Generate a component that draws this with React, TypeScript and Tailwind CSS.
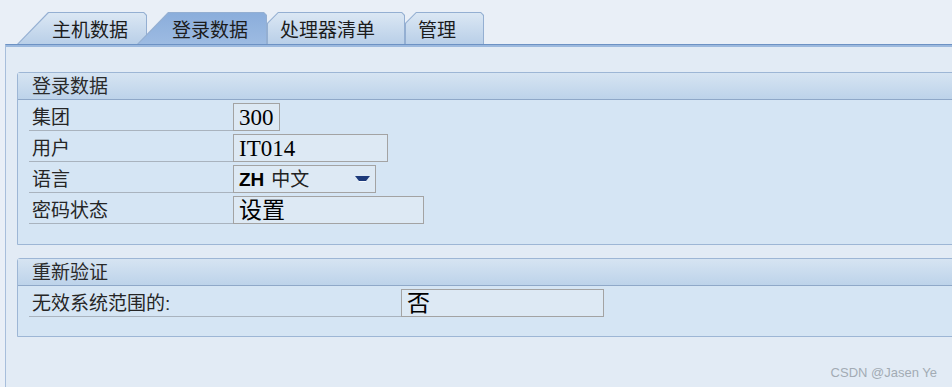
import React from 'react';

// SAP GUI style tab strip + grouped form (登录数据)

const cjk = "font-['Liberation_Sans','Noto_Sans_CJK_SC',sans-serif]";
const inputFont = "font-['Liberation_Serif','Noto_Sans_CJK_SC',serif]";

function SlantTab({ label, selected }: { label: string; selected?: boolean }) {
    return (
        <div className={`relative h-full w-[130px] ${selected ? 'z-20 -ml-[10px]' : 'z-10'}`}>
            <div className="absolute inset-0 bg-[#94afd2] [clip-path:polygon(0_100%,31px_0,calc(100%_-_3px)_0,100%_3px,100%_100%)]" />
            <div
                className={`absolute inset-0 [clip-path:polygon(1.5px_100%,31.8px_1px,calc(100%_-_3.5px)_1px,calc(100%_-_1px)_3.5px,calc(100%_-_1px)_100%)] ${
                    selected
                        ? 'bg-linear-to-b from-[#8aaddb] to-[#9dbbe2]'
                        : 'bg-linear-to-b from-[#dce8f4] to-[#b9cfe8]'
                }`}
            />
            <div className={`relative flex h-full items-end pb-[4px] pl-[35px] text-[19px] leading-none text-[#1c1c1c] ${cjk}`}>
                {label}
            </div>
        </div>
    );
}

function CornerTab({ label, width }: { label: string; width: string }) {
    return (
        <div className={`relative h-full ${width}`}>
            <div className="absolute inset-0 bg-[#94afd2] [clip-path:polygon(0_100%,0_11px,11px_0,calc(100%_-_3px)_0,100%_3px,100%_100%)]" />
            <div className="absolute inset-0 bg-linear-to-b from-[#dce8f4] to-[#b9cfe8] [clip-path:polygon(1px_100%,1px_11.4px,11.4px_1px,calc(100%_-_3.5px)_1px,calc(100%_-_1px)_3.5px,calc(100%_-_1px)_100%)]" />
            <div className={`relative flex h-full items-end pb-[4px] pl-[13px] text-[19px] leading-none text-[#1c1c1c] ${cjk}`}>
                {label}
            </div>
        </div>
    );
}

function GroupHeader({ title }: { title: string }) {
    return (
        <div className={`flex h-[27px] items-center border-b border-[#8fa8c8] bg-linear-to-b from-[#d6e4f2] to-[#bdd3ea] pl-[14px] text-[19px] leading-none text-[#2a2a2a] ${cjk}`}>
            {title}
        </div>
    );
}

function FieldRow({
    label,
    labelWidth,
    children,
}: {
    label: string;
    labelWidth: string;
    children: React.ReactNode;
}) {
    return (
        <div className="flex h-[31px] items-end">
            <div className={`flex h-full items-end border-b border-[#a9b3be] pb-[3px] pl-[3px] text-[19px] leading-none text-[#262626] ${labelWidth} ${cjk}`}>
                {label}
            </div>
            {children}
        </div>
    );
}

function Field({ value, width }: { value: string; width: string }) {
    return (
        <div className={`flex h-[28px] items-center border border-[#a3a3a3] bg-[#dde9f4] pl-[5px] text-[23px] leading-none text-black ${width} ${inputFont}`}>
            {value}
        </div>
    );
}

export default function App() {
    return (
        <div className="flex h-[387px] w-[952px] flex-col overflow-hidden bg-[#e9eff7]">
            {/* tab strip */}
            <div className="mt-[12px] flex h-[32px] shrink-0 pl-[17px]">
                <SlantTab label="主机数据" />
                <SlantTab label="登录数据" selected />
                <CornerTab label="处理器清单" width="w-[138px]" />
                <CornerTab label="管理" width="w-[79px]" />
            </div>

            {/* tab page */}
            <div className="relative ml-[5px] flex-1 border-l border-t border-[#a7bedb] border-t-[#6d92c4] bg-[#e2ebf5]">
                <div className="border-t-2 border-[#9cb9de] pt-[25px]">
                    <div className="-mr-[20px] ml-[11px] flex flex-col gap-[13px]">
                        {/* 登录数据 group */}
                        <div className="rounded-tl-[3px] border border-[#9db6d5] bg-[#d5e5f4]">
                            <GroupHeader title="登录数据" />
                            <div className="pb-[20px] pl-[11px]">
                                <FieldRow label="集团" labelWidth="w-[204px]">
                                    <Field value="300" width="w-[47px]" />
                                </FieldRow>
                                <FieldRow label="用户" labelWidth="w-[204px]">
                                    <Field value="IT014" width="w-[155px]" />
                                </FieldRow>
                                <FieldRow label="语言" labelWidth="w-[204px]">
                                    <div className="relative flex h-[28px] w-[143px] items-center border border-[#a3a3a3] bg-[#dde9f4] pl-[5px] leading-none">
                                        <span className="font-['Liberation_Sans',sans-serif] text-[19px] font-bold text-black">ZH</span>
                                        <span className={`ml-[7px] text-[19px] text-[#222] ${cjk}`}>中文</span>
                                        <svg className="absolute right-[5px] top-[10px]" width="15" height="7" viewBox="0 0 15 7">
                                            <polygon points="0,0 15,0 11,5 4,5" fill="#1d3a7a" />
                                            <rect x="4" y="5" width="7" height="1" fill="#ffffff" opacity="0.8" />
                                        </svg>
                                    </div>
                                </FieldRow>
                                <FieldRow label="密码状态" labelWidth="w-[204px]">
                                    <Field value="设置" width="w-[191px]" />
                                </FieldRow>
                            </div>
                        </div>

                        {/* 重新验证 group */}
                        <div className="rounded-tl-[3px] border border-[#9db6d5] bg-[#d5e5f4]">
                            <GroupHeader title="重新验证" />
                            <div className="pb-[19px] pl-[11px]">
                                <FieldRow label="无效系统范围的:" labelWidth="w-[372px]">
                                    <Field value="否" width="w-[203px]" />
                                </FieldRow>
                            </div>
                        </div>
                    </div>
                </div>

                {/* watermark */}
                <div className="absolute bottom-[8px] right-[15px] font-['Liberation_Sans',sans-serif] text-[13px] leading-none text-[#a3abb4]">
                    CSDN @Jasen Ye
                </div>
            </div>
        </div>
    );
}
